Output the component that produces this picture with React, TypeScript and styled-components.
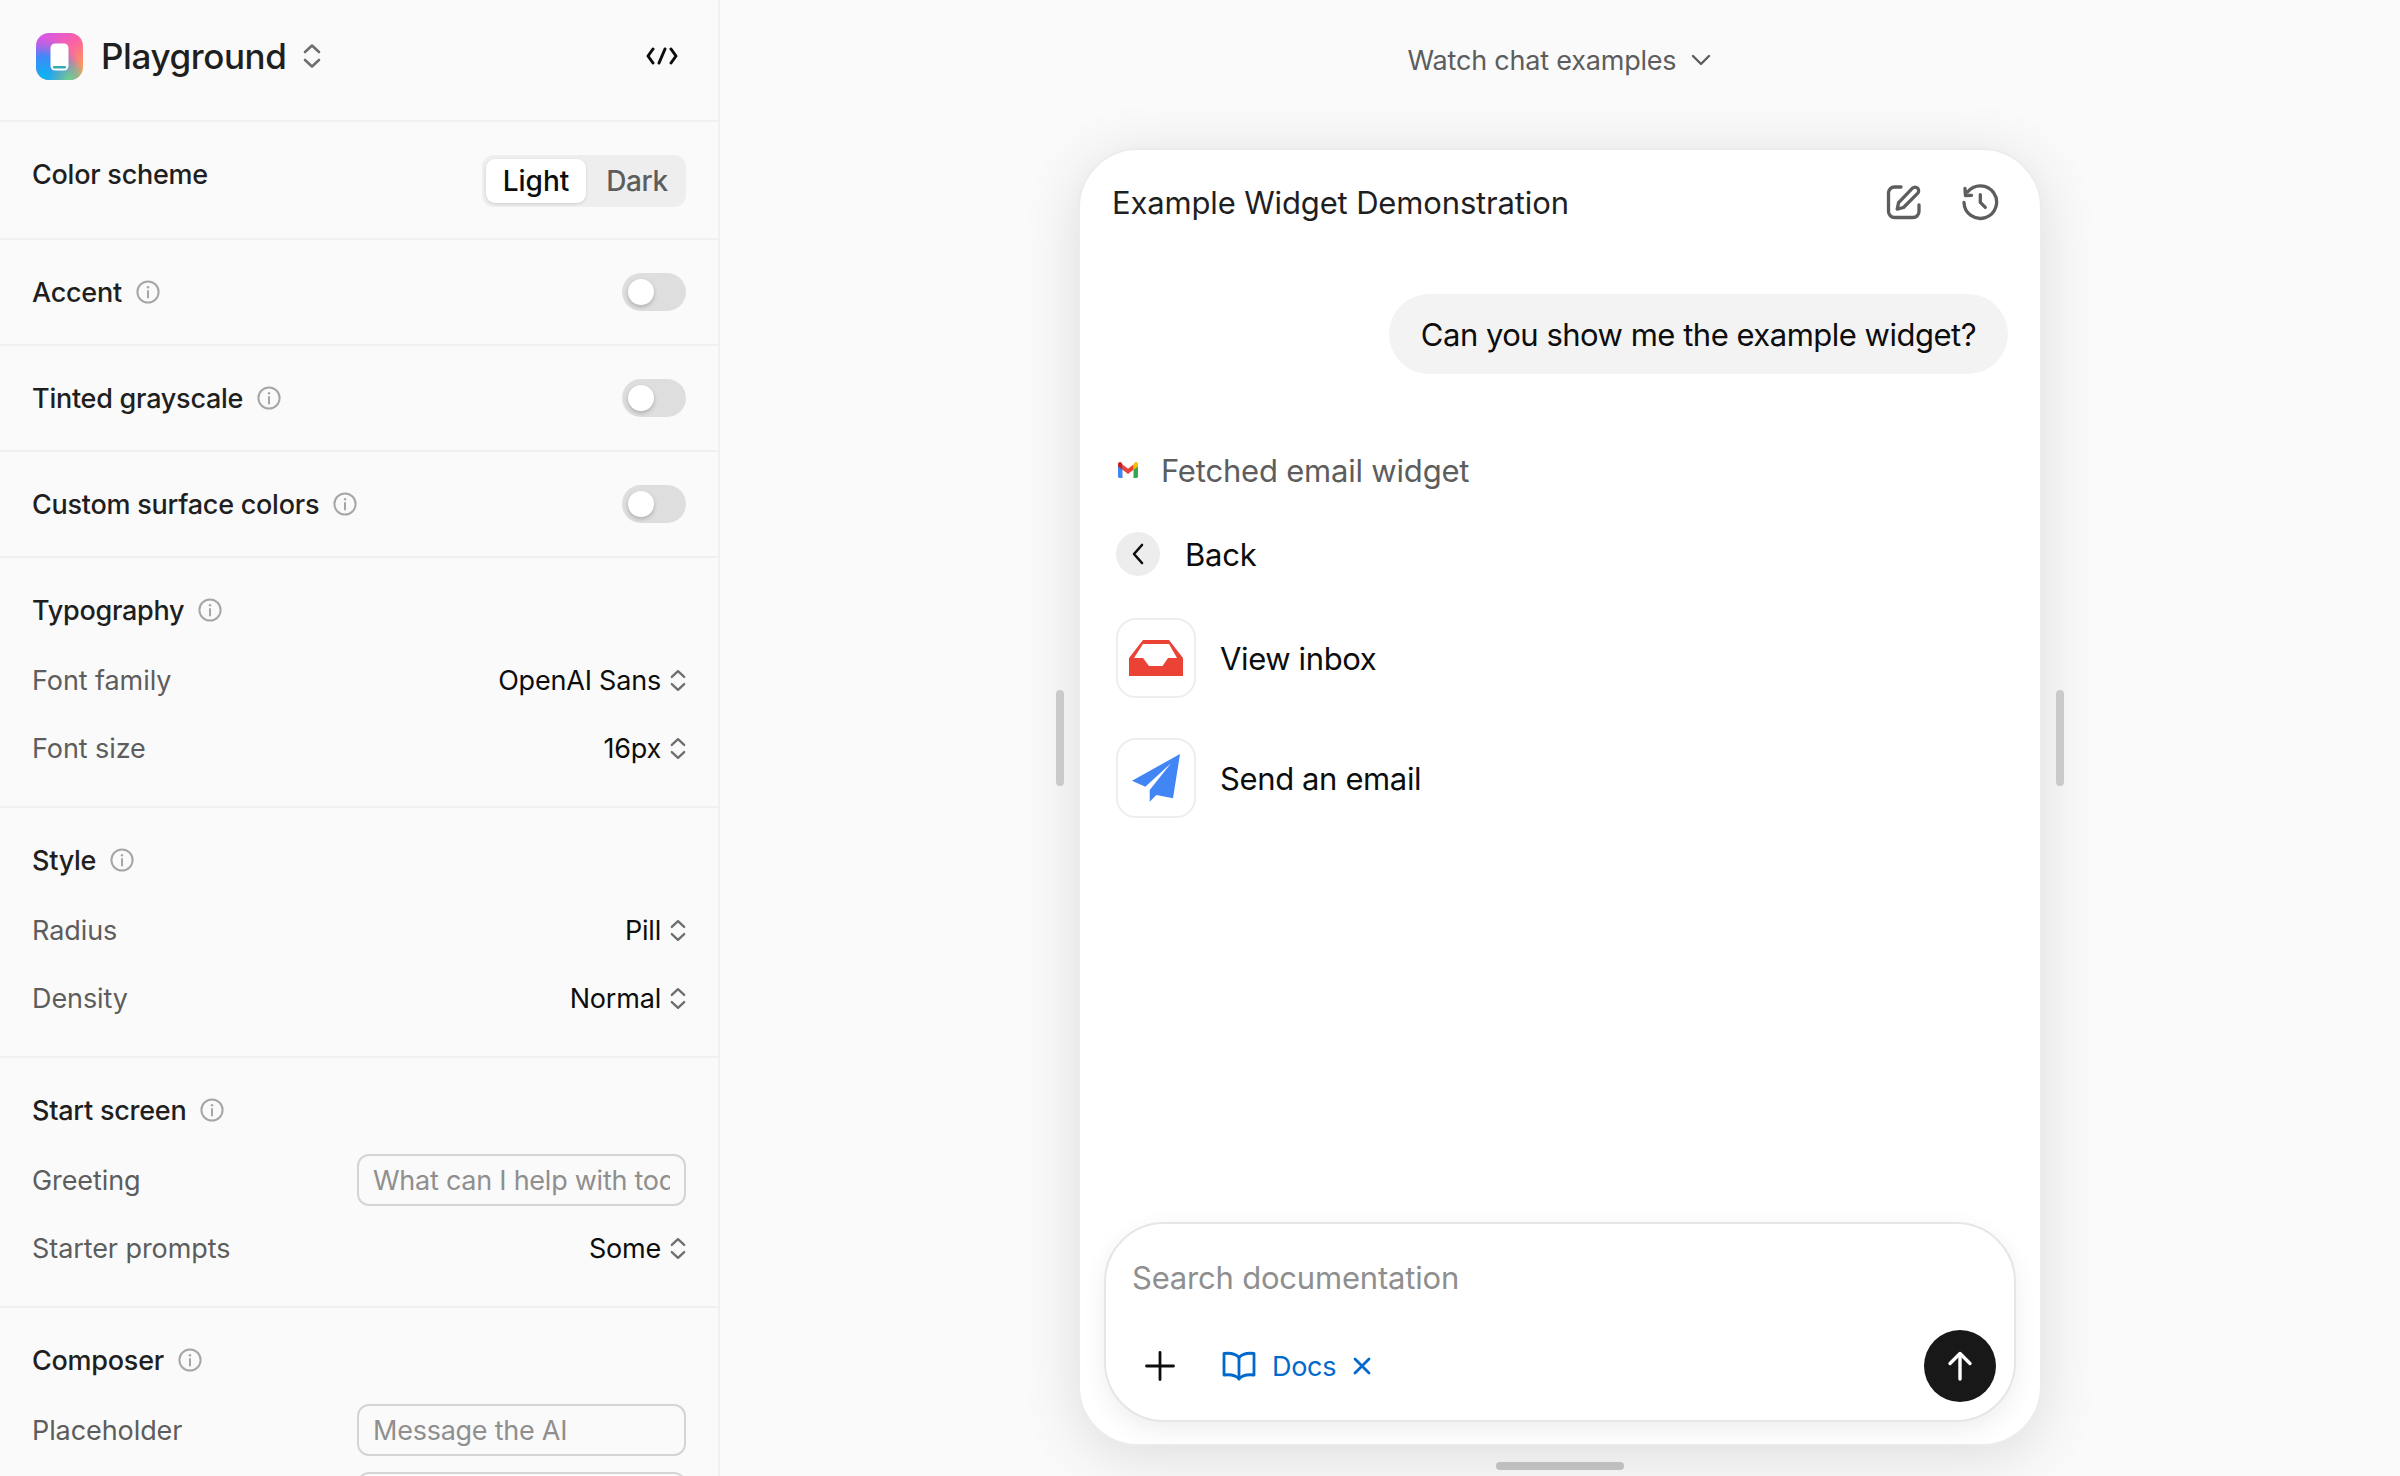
import React from "react";
import styled, { createGlobalStyle } from "styled-components";

const Global = createGlobalStyle`
  html, body { margin: 0; padding: 0; height: 1476px; overflow: hidden; background: #fafafa; }
  * { box-sizing: border-box; }
  body { font-family: Inter, "Open Sans", "Liberation Sans", sans-serif; color: #0d0d0d; -webkit-font-smoothing: antialiased; }
`;

const Page = styled.div`
  display: flex;
  width: 2400px;
  height: 1476px;
  overflow: hidden;
  background: #fafafa;
`;

const Sidebar = styled.aside`
  flex: 0 0 720px;
  height: 1476px;
  overflow: hidden;
  border-right: 2px solid #f0f0f0;
`;

const SideHeader = styled.header`
  display: flex;
  align-items: center;
  justify-content: space-between;
  height: 122px;
  padding: 0 40px 8px 36px;
  border-bottom: 2px solid #f0f0f0;
`;

const Brand = styled.div`
  display: flex;
  align-items: center;
  gap: 18px;
`;

const BrandName = styled.span`
  font-size: 35px;
  font-weight: 500;
  letter-spacing: -0.4px;
  margin-right: -2px;
  color: #1f1f1f;
`;

const Section = styled.section`
  padding: 33px 32px 32px;
  border-bottom: 2px solid #f0f0f0;
`;

const InlineSection = styled.section<{ $h: number }>`
  display: flex;
  align-items: center;
  justify-content: space-between;
  height: ${(p) => p.$h}px;
  padding: 0 32px;
  border-bottom: 2px solid #f0f0f0;
`;

const Heading = styled.div<{ $mb?: number }>`
  display: flex;
  align-items: center;
  gap: 14px;
  height: 38px;
  margin-bottom: ${(p) => p.$mb ?? 0}px;
  font-size: 27px;
  font-weight: 500;
  letter-spacing: -0.25px;
  color: #1f1f1f;
`;

const Row = styled.div`
  display: flex;
  align-items: center;
  justify-content: space-between;
  height: 52px;
  & + & { margin-top: 16px; }
`;

const RowLabel = styled.span`
  font-size: 27px;
  letter-spacing: -0.08px;
  color: #5d5d5d;
`;

const SelectValue = styled.span`
  display: flex;
  align-items: center;
  gap: 9px;
  font-size: 27px;
  letter-spacing: -0.2px;
  color: #0d0d0d;
`;

const TextField = styled.input`
  width: 329px;
  height: 52px;
  padding: 0 14px;
  border: 2px solid #d4d4d4;
  border-radius: 12px;
  outline: none;
  background: transparent;
  font-family: inherit;
  font-size: 27px;
  letter-spacing: -0.25px;
  &::placeholder { color: #8f8f8f; opacity: 1; }
`;

const Segmented = styled.div`
  display: flex;
  align-items: center;
  padding: 4px;
  width: 204px;
  height: 52px;
  margin-top: 2px;
  border-radius: 12px;
  background: #eeeeee;
`;

const Segment = styled.div<{ $active?: boolean }>`
  flex: ${(p) => (p.$active ? "0 0 100px" : "1")};
  height: 44px;
  padding-left: ${(p) => (p.$active ? 0 : 6)}px;
  display: flex;
  align-items: center;
  justify-content: center;
  border-radius: 9px;
  font-size: 28px;
  font-weight: 500;
  letter-spacing: ${(p) => (p.$active ? "0" : "-0.4px")};
  color: ${(p) => (p.$active ? "#0d0d0d" : "#5d5d5d")};
  background: ${(p) => (p.$active ? "#ffffff" : "transparent")};
  box-shadow: ${(p) => (p.$active ? "0 1px 3px rgba(0,0,0,.14)" : "none")};
`;

const Switch = styled.div`
  width: 64px;
  height: 38px;
  padding: 6px;
  border-radius: 19px;
  background: #dedede;
`;

const Knob = styled.div`
  width: 26px;
  height: 26px;
  border-radius: 50%;
  background: #fff;
  box-shadow: 0 2px 4px rgba(0,0,0,.22);
`;

const SchemeLabel = styled(Heading)`
  margin-bottom: 12px;
`;

const Main = styled.main`
  flex: 1;
  display: flex;
  flex-direction: column;
  align-items: center;
`;

const Examples = styled.div`
  display: flex;
  align-items: center;
  justify-content: center;
  gap: 14px;
  height: 120px;
  margin-bottom: 28px;
  font-size: 27px;
  letter-spacing: -0.2px;
  color: #5d5d5d;
`;

const CardWrap = styled.div`
  position: relative;
  width: 964px;
  height: 1298px;
`;

const Handle = styled.div<{ $side: "left" | "right" }>`
  position: absolute;
  top: 542px;
  ${(p) => p.$side}: -22px;
  width: 8px;
  height: 96px;
  border-radius: 4px;
  background: #cacaca;
`;

const Card = styled.div`
  display: flex;
  flex-direction: column;
  height: 100%;
  padding: 0 24px 22px;
  background: #fff;
  border: 2px solid #ececec;
  border-radius: 60px;
  box-shadow: 0 10px 60px rgba(0,0,0,.12);
`;

const CardHeader = styled.div`
  display: flex;
  align-items: center;
  justify-content: space-between;
  height: 104px;
  padding: 0 17px 0 8px;
`;

const CardTitle = styled.h1`
  margin: 0;
  font-size: 31px;
  font-weight: 400;
  letter-spacing: -0.15px;
  color: #1f1f1f;
`;

const HeaderActions = styled.div`
  display: flex;
  align-items: center;
  gap: 39px;
`;

const Thread = styled.div`
  flex: 1;
  display: flex;
  flex-direction: column;
  padding: 40px 0 0 12px;
`;

const Bubble = styled.div`
  align-self: flex-end;
  height: 80px;
  padding: 0 32px;
  margin-right: 8px;
  display: flex;
  align-items: center;
  border-radius: 40px;
  background: #f3f3f3;
  font-size: 31px;
  letter-spacing: -0.5px;
  white-space: nowrap;
  color: #0d0d0d;
`;

const ToolLine = styled.div`
  display: flex;
  align-items: center;
  gap: 23px;
  height: 44px;
  margin-top: 74px;
  padding-left: 2px;
  font-size: 31px;
  letter-spacing: -0.2px;
  color: #5d5d5d;
`;

const BackRow = styled.div`
  display: flex;
  align-items: center;
  gap: 25px;
  margin-top: 40px;
  font-size: 31px;
  letter-spacing: -0.2px;
`;

const BackCircle = styled.span`
  width: 44px;
  height: 44px;
  display: flex;
  align-items: center;
  justify-content: center;
  border-radius: 50%;
  background: #ededed;
`;

const LinkList = styled.div`
  display: flex;
  flex-direction: column;
  gap: 40px;
  margin-top: 42px;
`;

const LinkRow = styled.div`
  display: flex;
  align-items: center;
  gap: 24px;
  font-size: 31px;
  letter-spacing: -0.38px;
`;

const Tile = styled.span`
  width: 80px;
  height: 80px;
  display: flex;
  align-items: center;
  justify-content: center;
  border: 2px solid #eeeeee;
  border-radius: 20px;
  background: #fff;
`;

const Composer = styled.div`
  height: 200px;
  padding: 31px 18px 18px 26px;
  display: flex;
  flex-direction: column;
  justify-content: space-between;
  border: 2px solid #e6e6e6;
  border-radius: 60px;
  background: #fff;
  box-shadow: 0 8px 24px rgba(0,0,0,.07);
`;

const ComposerText = styled.div`
  font-size: 31px;
  letter-spacing: -0.2px;
  line-height: 46px;
  color: #8f8f8f;
`;

const ComposerBar = styled.div`
  display: flex;
  align-items: center;
  justify-content: space-between;
`;

const ComposerTools = styled.div`
  display: flex;
  align-items: center;
  gap: 47px;
  padding-left: 13px;
`;

const Tag = styled.div`
  display: flex;
  align-items: center;
  font-size: 27px;
  letter-spacing: -0.3px;
  color: #0169cc;
`;

const TagText = styled.span`
  margin: 0 17px 0 16px;
`;

const SendButton = styled.div`
  width: 72px;
  height: 72px;
  display: flex;
  align-items: center;
  justify-content: center;
  border-radius: 50%;
  background: #181818;
`;

const HomeBar = styled.div`
  width: 128px;
  height: 8px;
  margin-top: 16px;
  border-radius: 4px;
  background: #c8c8c8;
`;

const Updown = ({ small }: { small?: boolean }) => (
  <svg
    width={small ? 16 : 18}
    height={small ? 23 : 26}
    viewBox="0 0 18 26"
    fill="none"
    stroke="#6e6e6e"
    strokeWidth="2.6"
    strokeLinecap="round"
    strokeLinejoin="round"
  >
    <path d="M2 9l7-6.500 7 6.500" />
    <path d="M2 17l7 6.500 7-6.500" />
  </svg>
);

const Info = () => (
  <svg width="24" height="24" viewBox="0 0 24 24" fill="none" stroke="#a6a6a6">
    <circle cx="12" cy="12" r="10.600" strokeWidth="2" />
    <path d="M12 11v6.500" strokeWidth="2" strokeLinecap="round" />
    <circle cx="12" cy="7.300" r="1.200" fill="#a6a6a6" stroke="none" />
  </svg>
);

const Logo = () => (
  <svg width="47" height="47" viewBox="0 0 47 47">
    <defs>
      <linearGradient id="lg1" x1="0" y1="0" x2="1" y2="1">
        <stop offset="0" stopColor="#cc55f8" />
        <stop offset="0.5" stopColor="#fb62a4" />
        <stop offset="1" stopColor="#ffb03c" />
      </linearGradient>
      <radialGradient id="lg2" cx="0.15" cy="0.95" r="0.85">
        <stop offset="0" stopColor="#06b8f0" />
        <stop offset="0.55" stopColor="#2f8cff" stopOpacity="0.9" />
        <stop offset="1" stopColor="#7a6cff" stopOpacity="0" />
      </radialGradient>
      <radialGradient id="lg3" cx="0.7" cy="1" r="0.45">
        <stop offset="0" stopColor="#6fd08c" />
        <stop offset="1" stopColor="#6fd08c" stopOpacity="0" />
      </radialGradient>
    </defs>
    <rect width="47" height="47" rx="13" fill="url(#lg1)" />
    <rect width="47" height="47" rx="13" fill="url(#lg2)" />
    <rect width="47" height="47" rx="13" fill="url(#lg3)" />
    <rect x="14.500" y="10.500" width="18" height="27" rx="4.500" fill="#fff" />
    <rect x="17" y="33" width="13" height="2.600" rx="1.300" fill="#32adb8" />
  </svg>
);

const CodeIcon = () => (
  <svg width="32" height="18" viewBox="0 0 32 18" fill="none" stroke="#0d0d0d" strokeWidth="3" strokeLinecap="round" strokeLinejoin="round">
    <path d="M7 2 2 9l5 7" />
    <path d="M25 2l5 7-5 7" />
    <path d="M19 2l-6 14" />
  </svg>
);

const Chevron = () => (
  <svg width="22" height="14" viewBox="0 0 22 14" fill="none" stroke="#5d5d5d" strokeWidth="2.400" strokeLinecap="round" strokeLinejoin="round">
    <path d="M3 3l8 8 8-8" />
  </svg>
);

const PenIcon = () => (
  <svg width="36" height="36" viewBox="0 0 36 36" fill="none" stroke="#5d5d5d" strokeWidth="3.300" strokeLinecap="round" strokeLinejoin="round">
    <path d="M15 3H8.500A6 6 0 0 0 2.500 9v18.500a6 6 0 0 0 6 6H27a6 6 0 0 0 6-6V21" />
    <path d="M26.500 4.200a3.600 3.600 0 0 1 5.100 5.100L17.500 23.500l-6.300 1.600 1.400-6.500z" />
  </svg>
);

const HistoryIcon = () => (
  <svg width="38" height="38" viewBox="-1 -1 38 38" fill="none" stroke="#5d5d5d" strokeWidth="3.300" strokeLinecap="round" strokeLinejoin="round">
    <path d="M2 18.500A16.300 16.300 0 1 0 5.500 8" />
    <path d="M3 4.500l.4 7 6.100-.2" />
    <path d="M18.300 10.700v7.600l5 5" />
  </svg>
);

const Gmail = () => (
  <svg width="20" height="16" viewBox="0 0 20 16">
    <path fill="#4285f4" d="M0 3h4.500v13H1.400A1.400 1.400 0 0 1 0 14.600z" />
    <path fill="#34a853" d="M15.500 3H20v11.600a1.400 1.400 0 0 1-1.400 1.400h-3.100z" />
    <path fill="#ea4335" d="M4.500 7.800V2.500L10 6.700l5.500-4.200v5.300L10 12z" />
    <path fill="#fbbc04" d="M15.500 2.500v5.300L20 4.400V2c0-1.700-2-2.600-3.300-1.600z" />
    <path fill="#c5221f" d="M0 4.400 4.500 7.800V2.500L3.300.4C2-.6 0 .3 0 2z" />
  </svg>
);

const BackChevron = () => (
  <svg width="14" height="24" viewBox="0 0 14 24" fill="none" stroke="#0d0d0d" strokeWidth="2.600" strokeLinecap="round" strokeLinejoin="round">
    <path d="M11 3 3 12l8 9" />
  </svg>
);

const InboxIcon = () => (
  <svg width="54" height="36" viewBox="0 0 54 36">
    <path fill="#ea4335" d="M14 0H40L54 18V36H0V18Z" />
    <path fill="#fff" d="M5 18 14 4H40L48 18H39L33.500 26H20L14 18Z" />
  </svg>
);

const PlaneIcon = () => (
  <svg width="48" height="48" viewBox="0 0 48 48">
    <path fill="#4285f4" d="M48 0 0 26.700 13.300 32.700 39 9.300 17.700 36V47.700L24.300 41 41 44.300Z" />
  </svg>
);

const PlusIcon = () => (
  <svg width="30" height="30" viewBox="0 0 30 30" fill="none" stroke="#0d0d0d" strokeWidth="2.800" strokeLinecap="round">
    <path d="M15 1.500v27M1.500 15h27" />
  </svg>
);

const BookIcon = () => (
  <svg width="34" height="30" viewBox="0 0 34 30" fill="none" stroke="#0169cc" strokeWidth="2.800" strokeLinecap="round" strokeLinejoin="round">
    <path d="M17 6.500C14 3 8 1.800 2 2.500v21.500c6-.7 12 .2 15 4 3-3.800 9-4.700 15-4V2.500C26 1.800 20 3 17 6.500z" />
    <path d="M17 6.500V28" />
  </svg>
);

const CloseIcon = () => (
  <svg width="18" height="18" viewBox="0 0 18 18" fill="none" stroke="#0169cc" strokeWidth="2.800" strokeLinecap="round">
    <path d="M2 2l14 14M16 2 2 16" />
  </svg>
);

const ArrowUp = () => (
  <svg width="28" height="30" viewBox="0 0 28 30" fill="none" stroke="#fff" strokeWidth="3.400" strokeLinecap="round" strokeLinejoin="round">
    <path d="M14 28V3" />
    <path d="M4 12.500 14 2.500l10 10" />
  </svg>
);

type Field = { label: string; value?: string; placeholder?: string };
type Group = { title: string; fields: Field[] };

const groups: Group[] = [
  { title: "Typography", fields: [{ label: "Font family", value: "OpenAI Sans" }, { label: "Font size", value: "16px" }] },
  { title: "Style", fields: [{ label: "Radius", value: "Pill" }, { label: "Density", value: "Normal" }] },
  { title: "Start screen", fields: [{ label: "Greeting", placeholder: "What can I help with today?" }, { label: "Starter prompts", value: "Some" }] },
  { title: "Composer", fields: [{ label: "Placeholder", placeholder: "Message the AI" }, { label: "", placeholder: "" }] },
];

export default function App() {
  return (
    <Page>
      <Global />
      <Sidebar>
        <SideHeader>
          <Brand>
            <Logo />
            <BrandName>Playground</BrandName>
            <Updown />
          </Brand>
          <CodeIcon />
        </SideHeader>
        <InlineSection $h={118}>
          <SchemeLabel>Color scheme</SchemeLabel>
          <Segmented>
            <Segment $active>Light</Segment>
            <Segment>Dark</Segment>
          </Segmented>
        </InlineSection>
        {["Accent", "Tinted grayscale", "Custom surface colors"].map((t) => (
          <InlineSection $h={106} key={t}>
            <Heading>
              {t}
              <Info />
            </Heading>
            <Switch>
              <Knob />
            </Switch>
          </InlineSection>
        ))}
        {groups.map((g) => (
          <Section key={g.title}>
            <Heading $mb={25}>
              {g.title}
              <Info />
            </Heading>
            {g.fields.map((f) => (
              <Row key={f.label}>
                <RowLabel>{f.label}</RowLabel>
                {f.value ? (
                  <SelectValue>
                    {f.value}
                    <Updown small />
                  </SelectValue>
                ) : (
                  <TextField readOnly placeholder={f.placeholder} />
                )}
              </Row>
            ))}
          </Section>
        ))}
      </Sidebar>
      <Main>
        <Examples>
          Watch chat examples
          <Chevron />
        </Examples>
        <CardWrap>
          <Handle $side="left" />
          <Handle $side="right" />
          <Card>
            <CardHeader>
              <CardTitle>Example Widget Demonstration</CardTitle>
              <HeaderActions>
                <PenIcon />
                <HistoryIcon />
              </HeaderActions>
            </CardHeader>
            <Thread>
              <Bubble>Can you show me the example widget?</Bubble>
              <ToolLine>
                <Gmail />
                Fetched email widget
              </ToolLine>
              <BackRow>
                <BackCircle>
                  <BackChevron />
                </BackCircle>
                Back
              </BackRow>
              <LinkList>
                <LinkRow>
                  <Tile>
                    <InboxIcon />
                  </Tile>
                  View inbox
                </LinkRow>
                <LinkRow>
                  <Tile>
                    <PlaneIcon />
                  </Tile>
                  Send an email
                </LinkRow>
              </LinkList>
            </Thread>
            <Composer>
              <ComposerText>Search documentation</ComposerText>
              <ComposerBar>
                <ComposerTools>
                  <PlusIcon />
                  <Tag>
                    <BookIcon />
                    <TagText>Docs</TagText>
                    <CloseIcon />
                  </Tag>
                </ComposerTools>
                <SendButton>
                  <ArrowUp />
                </SendButton>
              </ComposerBar>
            </Composer>
          </Card>
        </CardWrap>
        <HomeBar />
      </Main>
    </Page>
  );
}
